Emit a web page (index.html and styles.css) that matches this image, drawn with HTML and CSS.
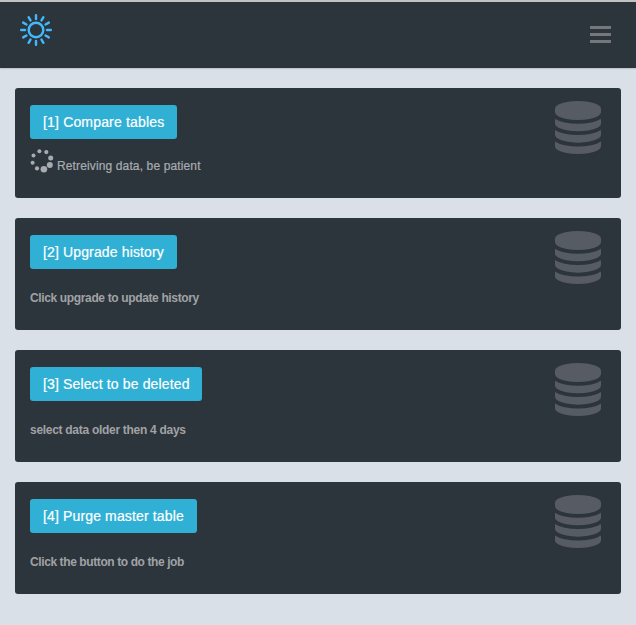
FILE: index.html
```html
<!DOCTYPE html>
<html lang="en">
<head>
<meta charset="utf-8">
<title>Tables</title>
<link rel="stylesheet" href="styles.css">
</head>
<body>
<svg class="defs" width="0" height="0" aria-hidden="true">
  <symbol id="database" viewBox="0 0 1536 1792" preserveAspectRatio="none"><path d="M768 768q237 0 443-43t325-127v170q0 69-103 128t-280 93.500-385 34.500-385-34.500-280-93.500-103-128v-170q119 84 325 127t443 43zm0 768q237 0 443-43t325-127v170q0 69-103 128t-280 93.500-385 34.500-385-34.500-280-93.500-103-128v-170q119 84 325 127t443 43zm0-384q237 0 443-43t325-127v170q0 69-103 128t-280 93.500-385 34.500-385-34.500-280-93.500-103-128v-170q119 84 325 127t443 43zm0-1152q208 0 385 34.500t280 93.500 103 128v128q0 69-103 128t-280 93.500-385 34.500-385-34.500-280-93.500-103-128v-128q0-69 103-128t280-93.500 385-34.500z"/></symbol>
</svg>
<header class="navbar">
  <svg class="logo" viewBox="-16 -16 32 32">
    <circle r="7.300"/>
    <path id="ray" d="M0-11V-14.800M0 11V14.800M-11 0H-14.800M11 0H14.800"/>
    <use href="#ray" transform="rotate(30)"/>
    <use href="#ray" transform="rotate(60)"/>
  </svg>
  <div class="menu" role="button" aria-label="Menu"><span></span><span></span><span></span></div>
</header>
<main class="cards">
  <section class="card card-loading">
    <div class="content">
      <button class="btn compare">[1] Compare tables</button>
      <p class="status">
        <svg class="spinner" viewBox="0 0 24 24">
          <circle cx="9.400" cy="2.700" r="2"/><circle cx="16.300" cy="3.600" r="2.100"/><circle cx="20.700" cy="9.400" r="2.500"/><circle cx="19.800" cy="16.600" r="3"/><circle cx="13.900" cy="20.700" r="3.300"/><circle cx="7" cy="19.900" r="2.100"/><circle cx="2.600" cy="14.200" r="2"/><circle cx="3.500" cy="7" r="2"/>
        </svg>
        <span>Retreiving data, be patient</span>
      </p>
    </div>
    <svg class="database"><use href="#database"/></svg>
  </section>
  <section class="card">
    <div class="content">
      <button class="btn upgrade">[2] Upgrade history</button>
      <p class="note note-upgrade">Click upgrade to update history</p>
    </div>
    <svg class="database"><use href="#database"/></svg>
  </section>
  <section class="card">
    <div class="content">
      <button class="btn select">[3] Select to be deleted</button>
      <p class="note note-select">select data older then 4 days</p>
    </div>
    <svg class="database"><use href="#database"/></svg>
  </section>
  <section class="card">
    <div class="content">
      <button class="btn purge">[4] Purge master table</button>
      <p class="note">Click the button to do the job</p>
    </div>
    <svg class="database"><use href="#database"/></svg>
  </section>
</main>
</body>
</html>
```
FILE: styles.css
```css
* { box-sizing: border-box; }
body {
  margin: 0;
  min-height: 625px;
  background: #d9e0e7;
  font-family: "Liberation Sans", Arial, sans-serif;
  font-size: 12px;
  color: #a8acb1;
}
.defs { display: block; }
.navbar {
  display: flex;
  justify-content: space-between;
  align-items: flex-start;
  height: 68px;
  padding: 12px 25px 0 20px;
  background: #2d353c;
  border-top: 2px solid #c2c2c2;
  box-shadow: 0 0 2px rgba(0, 0, 0, .35);
}
.logo {
  width: 32px;
  height: 32px;
  fill: none;
  stroke: #42b9fb;
  stroke-width: 2.400;
  stroke-linecap: round;
}
.menu {
  display: flex;
  flex-direction: column;
  gap: 4px;
  width: 21px;
  margin-top: 12px;
}
.menu span { height: 3px; background: #76777d; }
.cards {
  display: flex;
  flex-direction: column;
  gap: 20px;
  padding: 20px 15px 31px;
}
.card {
  display: flex;
  justify-content: space-between;
  height: 112px;
  padding: 13px 20px 0 15px;
  background: #2d353c;
  border-radius: 3px;
}
.card-loading { height: 110px; }
.content { padding-top: 4px; }
.btn {
  display: block;
  height: 34px;
  padding: 0 0 0 13px;
  border: 0;
  border-radius: 3px;
  background: #31b0d5;
  color: #fff;
  font: 14px/34px "Liberation Sans", Arial, sans-serif;
  letter-spacing: .14px;
  text-align: left;
  white-space: nowrap;
  -webkit-text-stroke: .2px #fff;
}
.compare, .upgrade { width: 147px; }
.compare { letter-spacing: .17px; }
.select { width: 172px; }
.purge { width: 167px; }
.status {
  display: flex;
  gap: 3px;
  margin: 9px 0 0;
}
.status span {
  padding-top: 10px;
  line-height: 16px;
  letter-spacing: .13px;
  -webkit-text-stroke: .2px #a8acb1;
}
.spinner { width: 24px; height: 25px; fill: #a8acb1; }
.note {
  margin: 21px 0 0;
  font-weight: bold;
  line-height: 16px;
  letter-spacing: -.4px;
  color: #a0a2a5;
}
.note-upgrade { letter-spacing: -.36px; }
.note-select { letter-spacing: -.29px; }
.database {
  width: 46px;
  height: 53px;
  fill: #575b63;
}
```
